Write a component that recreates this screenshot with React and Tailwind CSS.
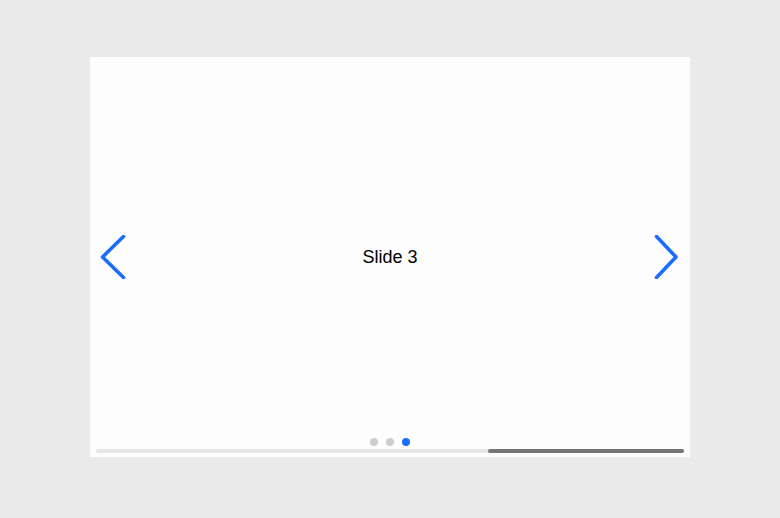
export default function App() {
  return (
    <div className="w-[780px] h-[518px] bg-[#eaeaea] flex justify-center pt-[57px]" style={{ fontFamily: '"Liberation Sans", Arial, sans-serif' }}>
      <div className="relative w-[600px] h-[400px] bg-[#fdfdfd] overflow-hidden">
        <div className="w-full h-full flex items-center justify-center text-[18px] text-black">Slide 3</div>
        <svg className="absolute left-[10px] top-[178px]" width="27" height="44" viewBox="0 0 27 44" fill="none">
          <polyline points="23.5,1.5 2.5,22 23.5,42.5" stroke="#1a6dff" strokeWidth="3.6" strokeLinecap="round" strokeLinejoin="round" />
        </svg>
        <svg className="absolute right-[10px] top-[178px]" width="27" height="44" viewBox="0 0 27 44" fill="none">
          <polyline points="3.5,1.5 23,22 3.5,42.5" stroke="#1a6dff" strokeWidth="3.6" strokeLinecap="round" strokeLinejoin="round" />
        </svg>
        <div className="absolute left-0 right-0 top-[381px] flex justify-center gap-[8px]">
          <span className="w-[8px] h-[8px] rounded-full bg-[#cccccc]" />
          <span className="w-[8px] h-[8px] rounded-full bg-[#cccccc]" />
          <span className="w-[8px] h-[8px] rounded-full bg-[#1a6dff]" />
        </div>
        <div className="absolute left-[6px] w-[588px] bottom-[4px] h-[4px] rounded-[10px] bg-[#e6e6e6]">
          <div className="absolute top-0 h-full left-[392px] w-[196px] rounded-[10px] bg-[#767676]" />
        </div>
      </div>
    </div>
  );
}
